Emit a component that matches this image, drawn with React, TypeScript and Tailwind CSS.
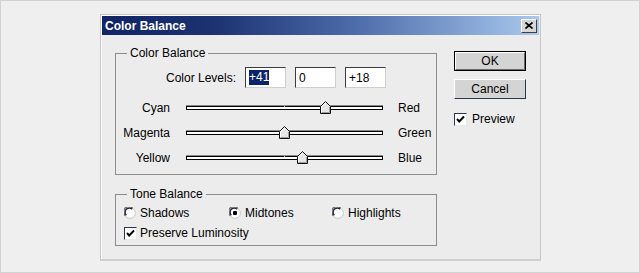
const font = "font-['Liberation_Sans',Arial,sans-serif]";

function Thumb({ left }: { left: number }) {
  return (
    <svg
      className="absolute top-[-5px]"
      style={{ left: left - 5 }}
      width="11"
      height="13"
      viewBox="0 0 11 13"
    >
      <polygon points="0.5,5.5 5.5,0.5 10.5,5.5 10.5,12.5 0.5,12.5" fill="#e6e6e6" stroke="#111" />
      <polyline points="1.5,12 1.5,6 5.5,2" fill="none" stroke="#fff" />
      <polyline points="9.5,6 9.5,11.5 1.5,11.5" fill="none" stroke="#9a9a9a" />
    </svg>
  );
}

function Slider({ left, right, pos }: { left: string; right: string; pos: number }) {
  return (
    <div className="flex h-[25px] items-center">
      <div className="w-[54px] text-right">{left}</div>
      <div className="relative ml-[16px] h-[5px] w-[197px] border-t border-t-[#8a8a8a]">
        <div className="h-[4px] border border-black bg-white" />
        <div className="absolute left-[98px] top-[-1px] h-[2px] w-px bg-[#9a9a9a]" />
        <Thumb left={pos} />
      </div>
      <div className="ml-[15px]">{right}</div>
    </div>
  );
}

function Radio({ checked }: { checked?: boolean }) {
  return (
    <svg width="12" height="12" viewBox="0 0 12 12" className="shrink-0">
      <circle cx="6" cy="6" r="5.4" fill="#fff" stroke="#c8c8c8" strokeWidth="1" />
      <path d="M1.1 8.6 A5.3 5.3 0 0 1 8.6 1.1" fill="none" stroke="#6a6a6a" strokeWidth="1.3" />
      <path d="M2.3 8.2 A4.1 4.1 0 0 1 8.2 2.3" fill="none" stroke="#1e2233" strokeWidth="1.4" />
      {checked && <rect x="4" y="4" width="4" height="4" rx="1" fill="#000" />}
    </svg>
  );
}

function Check() {
  return (
    <div className="h-[13px] w-[13px] shrink-0 border border-t-[#2f3650] border-l-[#2f3650] border-b-[#e8e8e8] border-r-[#e8e8e8] bg-white">
      <svg width="11" height="11" viewBox="0 0 11 11">
        <polyline points="2,5 4.2,7.5 9,2.5" fill="none" stroke="#000" strokeWidth="1.9" />
      </svg>
    </div>
  );
}

function Level({ value, selected }: { value: string; selected?: boolean }) {
  return (
    <div className="flex h-[21px] w-[41px] items-center border border-t-[#3c3c3c] border-l-[#3c3c3c] border-b-[#cfcfcf] border-r-[#cfcfcf] bg-white pl-[3px]">
      {selected ? <span className="bg-[#0a246a] leading-[15px] text-white">{value}</span> : <span>{value}</span>}
    </div>
  );
}

export default function App() {
  return (
    <div className={`${font} h-[273px] w-[640px] border border-[#d2d2d2] bg-[#efefef] pl-[99px] pt-[13px] text-[12px] text-black`}>
      <div className="h-[247px] w-[441px] border border-[#c6c6c6] border-b-2 border-b-[#cfcfcf] bg-[#ececec] p-[1px] shadow-[inset_1px_1px_0_#ffffff]">
        <div className="flex h-[19px] items-center justify-between bg-[linear-gradient(to_right,#112566_0%,#1b3170_25%,#4d6caa_58%,#a9c9ef_100%)] pl-[3px] pr-[2px]">
          <span className="text-[12px] font-bold text-white">Color Balance</span>
          <div className="flex h-[14px] w-[16px] items-center justify-center border border-t-white border-l-white border-b-[#404040] border-r-[#404040] bg-[#d6d6d6]">
            <svg width="8" height="7" viewBox="0 0 8 7">
              <path d="M0.5 0.5 L7.5 6.5 M7.5 0.5 L0.5 6.5" stroke="#000" strokeWidth="1.7" />
            </svg>
          </div>
        </div>

        <div className="flex px-[13px] pt-[11px]">
          <div className="w-[325px]">
            <fieldset className="border border-[#8c8c8c] pb-[4px]">
              <legend className="ml-[11px] px-[3px] leading-[14px]">Color Balance</legend>
              <div className="mt-[7px] flex items-center">
                <div className="w-[120px] text-right">Color Levels:</div>
                <div className="ml-[9px] flex gap-[9px]">
                  <Level value="+41" selected />
                  <Level value="0" />
                  <Level value="+18" />
                </div>
              </div>
              <div className="mt-[7px]">
                <Slider left="Cyan" right="Red" pos={139} />
                <Slider left="Magenta" right="Green" pos={98} />
                <Slider left="Yellow" right="Blue" pos={116} />
              </div>
            </fieldset>

            <fieldset className="mt-[12px] border border-[#8c8c8c] pb-[5px]">
              <legend className="ml-[11px] px-[3px] leading-[14px]">Tone Balance</legend>
              <div className="mt-[5px] flex h-[14px] items-center pl-[8px]">
                <div className="flex w-[105px] items-center gap-[4px]">
                  <Radio />
                  <span>Shadows</span>
                </div>
                <div className="flex w-[103px] items-center gap-[4px]">
                  <Radio checked />
                  <span>Midtones</span>
                </div>
                <div className="flex items-center gap-[4px]">
                  <Radio />
                  <span>Highlights</span>
                </div>
              </div>
              <div className="mt-[6px] flex h-[14px] items-center gap-[3px] pl-[8px]">
                <Check />
                <span>Preserve Luminosity</span>
              </div>
            </fieldset>
          </div>

          <div className="ml-[17px] pt-[5px]">
            <div className="h-[20px] w-[72px] border border-black">
              <div className="flex h-full items-center justify-center border border-t-white border-l-white border-b-[#6a6a6a] border-r-[#6a6a6a] bg-[#d4d4d4]">
                OK
              </div>
            </div>
            <div className="mt-[8px] flex h-[20px] w-[72px] items-center justify-center border border-t-white border-l-white border-b-[#2a3550] border-r-[#2a3550] bg-[#d4d4d4]">
              Cancel
            </div>
            <div className="mt-[11px] flex items-center gap-[5px]">
              <Check />
              <span>Preview</span>
            </div>
          </div>
        </div>
      </div>
    </div>
  );
}
